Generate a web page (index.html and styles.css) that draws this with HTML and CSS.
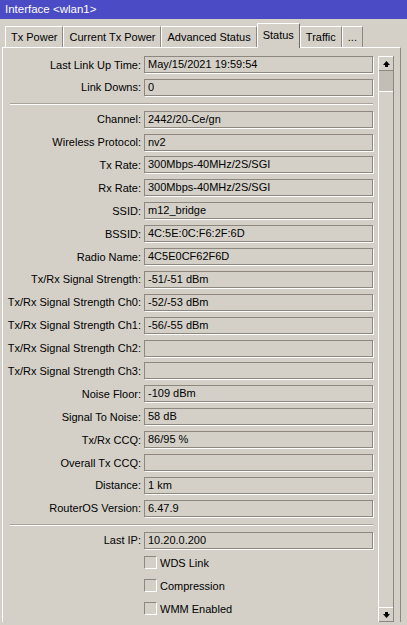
FILE: index.html
```html
<!DOCTYPE html>
<html lang="en">
<head>
  <meta charset="UTF-8">
  <meta name="viewport" content="width=device-width, initial-scale=1.0">
  <title>Interface &lt;wlan1&gt;</title>
  <link rel="stylesheet" href="styles.css">
</head>
<body>

  <div class="titlebar">Interface &lt;wlan1&gt;</div>

  <div class="tabs">
    <div class="tab">Tx Power</div>
    <div class="tab">Current Tx Power</div>
    <div class="tab">Advanced Status</div>
    <div class="tab active">Status</div>
    <div class="tab">Traffic</div>
    <div class="tab">...</div>
  </div>

  <div class="panel">
    <div class="form">
      <div class="row"><label>Last Link Up Time:</label><div class="field">May/15/2021 19:59:54</div></div>
      <div class="row"><label>Link Downs:</label><div class="field">0</div></div>

      <div class="sep"></div>

      <div class="row"><label>Channel:</label><div class="field">2442/20-Ce/gn</div></div>
      <div class="row"><label>Wireless Protocol:</label><div class="field">nv2</div></div>
      <div class="row"><label>Tx Rate:</label><div class="field">300Mbps-40MHz/2S/SGI</div></div>
      <div class="row"><label>Rx Rate:</label><div class="field">300Mbps-40MHz/2S/SGI</div></div>
      <div class="row"><label>SSID:</label><div class="field">m12_bridge</div></div>
      <div class="row"><label>BSSID:</label><div class="field">4C:5E:0C:F6:2F:6D</div></div>
      <div class="row"><label>Radio Name:</label><div class="field">4C5E0CF62F6D</div></div>
      <div class="row"><label>Tx/Rx Signal Strength:</label><div class="field">-51/-51 dBm</div></div>
      <div class="row"><label>Tx/Rx Signal Strength Ch0:</label><div class="field">-52/-53 dBm</div></div>
      <div class="row"><label>Tx/Rx Signal Strength Ch1:</label><div class="field">-56/-55 dBm</div></div>
      <div class="row"><label>Tx/Rx Signal Strength Ch2:</label><div class="field"></div></div>
      <div class="row"><label>Tx/Rx Signal Strength Ch3:</label><div class="field"></div></div>
      <div class="row"><label>Noise Floor:</label><div class="field">-109 dBm</div></div>
      <div class="row"><label>Signal To Noise:</label><div class="field">58 dB</div></div>
      <div class="row"><label>Tx/Rx CCQ:</label><div class="field">86/95 %</div></div>
      <div class="row"><label>Overall Tx CCQ:</label><div class="field"></div></div>
      <div class="row"><label>Distance:</label><div class="field">1 km</div></div>
      <div class="row"><label>RouterOS Version:</label><div class="field">6.47.9</div></div>

      <div class="sep"></div>

      <div class="row"><label>Last IP:</label><div class="field">10.20.0.200</div></div>
      <div class="row"><span></span><div class="check"><span class="box"></span>WDS Link</div></div>
      <div class="row"><span></span><div class="check"><span class="box"></span>Compression</div></div>
      <div class="row"><span></span><div class="check"><span class="box"></span>WMM Enabled</div></div>
    </div>

    <!-- vertical scrollbar of the status form -->
    <div class="scrollbar">
      <div class="sb-btn">
        <svg width="7" height="6" viewBox="0 0 7 6"><path d="M3.5 0 L7 4 L5 4 L5 6 L2 6 L2 4 L0 4 Z" fill="#000"/></svg>
      </div>
      <div class="sb-thumb"></div>
      <div class="sb-track"></div>
      <div class="sb-btn">
        <svg width="7" height="6" viewBox="0 0 7 6"><path d="M3.5 6 L7 2 L5 2 L5 0 L2 0 L2 2 L0 2 Z" fill="#000"/></svg>
      </div>
    </div>
  </div>

</body>
</html>
```

FILE: styles.css
```css
body {
  font-family: "Liberation Sans", Arial, sans-serif;
  font-size: 11px;
  color: #000;
  margin: 0;
  padding: 0;
  background-color: #d4d0c8;
  overflow: hidden;
}
.titlebar {
  background-color: #4b4bc6;
  color: white;
  height: 19px;
  line-height: 19px;
  padding-left: 5px;
  font-size: 11.5px;
}

/* tab strip */
.tabs {
  display: flex;
  align-items: flex-end;
  height: 28px;
  padding-left: 5px;
  position: relative;
  z-index: 1;
}
.tab {
  height: 21px;
  line-height: 21px;
  padding: 0 5px;
  border-top: 1px solid #fff;
  border-left: 1px solid #fff;
  border-right: 1px solid #8c8880;
  box-sizing: border-box;
  white-space: nowrap;
}
.tab.active {
  height: 25px;
  line-height: 22px;
  margin-bottom: -1px;
  background-color: #d4d0c8;
  border-right-color: #6f6c66;
}

/* main panel */
.panel {
  display: flex;
  margin-left: 2px;
  width: 397px;
  border-top: 1px solid #fff;
  border-left: 1px solid #fff;
  border-right: 1px solid #8c8880;
}
.form {
  display: flex;
  flex-direction: column;
  gap: 5.9px;
  padding-top: 8px;
  width: 370px;
}
.row {
  display: grid;
  grid-template-columns: 138px 229px;
  column-gap: 3px;
  height: 17px;
  align-items: center;
}
.row label {
  text-align: right;
  white-space: nowrap;
}
.field {
  height: 17px;
  line-height: 15px;
  box-sizing: border-box;
  padding-left: 3px;
  border: 1px solid #8c8880;
  box-shadow: 1px 1px 0 #fff;
  white-space: nowrap;
}
.sep {
  height: 1px;
  margin: 1px 0 0 7px;
  background-color: #a8a49c;
  border-bottom: 1px solid #fff;
}
.check {
  display: flex;
  align-items: center;
  gap: 3px;
}
.box {
  width: 13px;
  height: 13px;
  box-sizing: border-box;
  border-top: 1px solid #8c8880;
  border-left: 1px solid #8c8880;
  border-right: 1px solid #fff;
  border-bottom: 1px solid #fff;
}

/* scrollbar */
.scrollbar {
  display: flex;
  flex-direction: column;
  width: 16px;
  height: 566px;
  margin: 8px 0 0 5px;
  box-sizing: border-box;
  border-left: 1px solid #fff;
  border-right: 1px solid #8c8880;
}
.sb-btn {
  height: 15px;
  display: flex;
  align-items: center;
  justify-content: center;
  box-sizing: border-box;
  border-top: 1px solid #fff;
  border-bottom: 1px solid #8c8880;
}
.sb-thumb {
  height: 20px;
  background-color: #c2beb6;
  border-bottom: 1px solid #fff;
}
.sb-track {
  flex: 1;
}
```
